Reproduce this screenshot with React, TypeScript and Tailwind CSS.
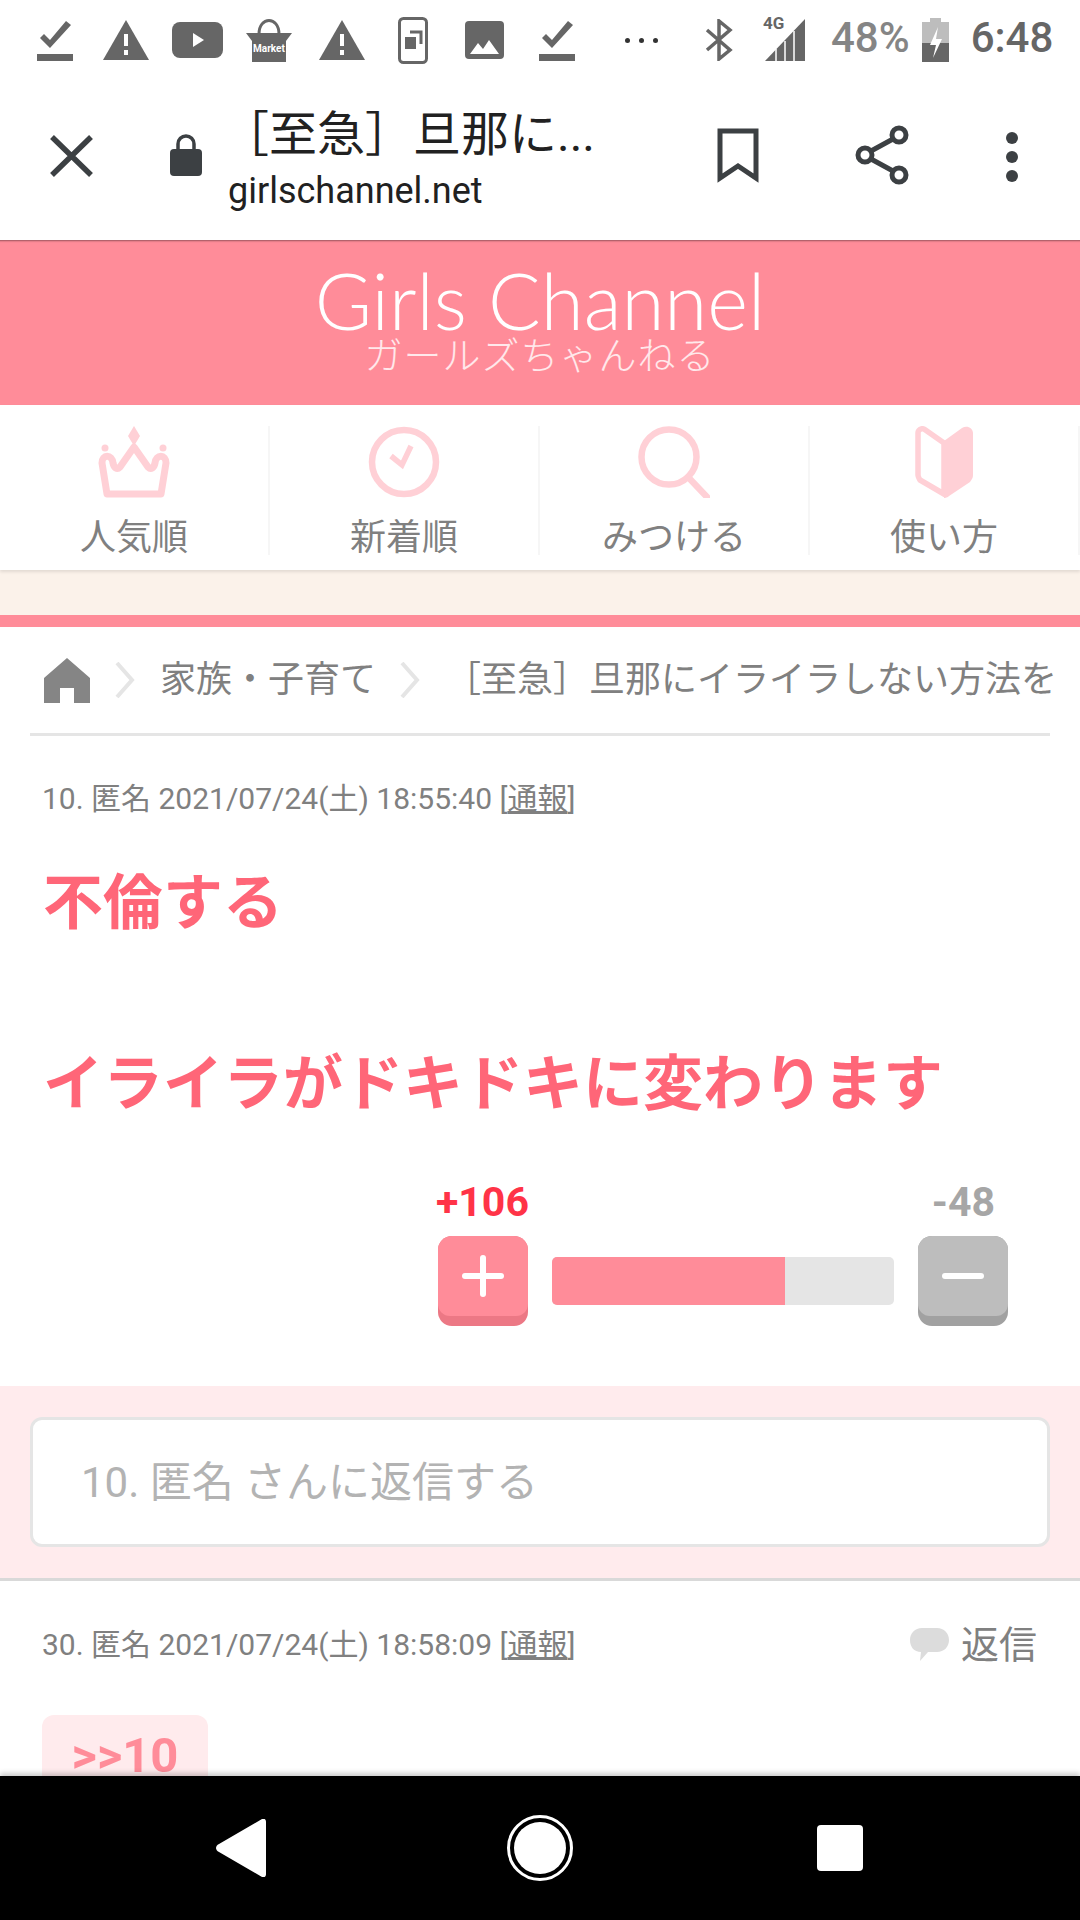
const font = "font-['Roboto','Noto_Sans_CJK_JP',sans-serif]";

function DoneIcon() {
  return (
    <svg width="36" height="42" viewBox="0 0 36 42" fill="#666">
      <path d="M3 19l4-4 6 6L29 2l5 4-21 23z" />
      <rect x="0" y="35" width="36" height="7" />
    </svg>
  );
}

function WarnIcon() {
  return (
    <svg width="46" height="40" viewBox="0 0 46 40">
      <path d="M23 0L46 40H0z" fill="#666" />
      <rect x="21" y="14" width="4" height="12" fill="#fff" />
      <rect x="21" y="30" width="4" height="5" fill="#fff" />
    </svg>
  );
}

function StatusBar() {
  return (
    <div className="h-[80px] shrink-0 flex items-center pl-[37px] bg-white">
      <DoneIcon />
      <div className="ml-[30px]"><WarnIcon /></div>
      <svg className="ml-[23px]" width="51" height="36" viewBox="0 0 51 36">
        <rect width="51" height="36" rx="8" fill="#666" />
        <path d="M21 11l11 7-11 7z" fill="#fff" />
      </svg>
      <svg className="ml-[23px]" width="46" height="44" viewBox="0 0 46 44">
        <path d="M13 16C13 -2 33 -2 33 16" fill="none" stroke="#666" strokeWidth="3" />
        <path d="M0 15h46l-6 8v21H6V23z" fill="#666" />
        <text x="23" y="34" textAnchor="middle" fontSize="10" fontWeight="700" fill="#fff" fontFamily="Roboto">Market</text>
      </svg>
      <div className="ml-[27px]"><WarnIcon /></div>
      <svg className="ml-[33px]" width="30" height="47" viewBox="0 0 30 47">
        <rect x="1.5" y="1.5" width="27" height="44" rx="4" fill="none" stroke="#666" strokeWidth="3" />
        <rect x="7" y="20" width="11" height="12" fill="#666" />
        <path d="M12 15h11v12" fill="none" stroke="#666" strokeWidth="3" />
      </svg>
      <svg className="ml-[37px]" width="39" height="38" viewBox="0 0 39 38">
        <rect width="39" height="38" rx="4" fill="#666" />
        <path d="M5 33l8-11 5 6 6-9 10 14z" fill="#fff" />
      </svg>
      <div className="ml-[35px]"><DoneIcon /></div>
      <div className="ml-[50px] flex gap-[9px]">
        <span className="w-[5px] h-[5px] rounded-full bg-[#333]" />
        <span className="w-[5px] h-[5px] rounded-full bg-[#333]" />
        <span className="w-[5px] h-[5px] rounded-full bg-[#333]" />
      </div>
      <svg className="ml-[47px]" width="28" height="42" viewBox="0 0 28 42" fill="none" stroke="#666" strokeWidth="3.5">
        <path d="M2 11l23 20-11 9V2l11 9L2 31" />
      </svg>
      <div className="ml-[31px] relative w-[41px] h-[42px]">
        <svg width="41" height="42" viewBox="0 0 41 42" fill="#666">
          <path d="M1 42L41 0v42z" />
          <path d="M12 30v12M21 22v20M30 12v30" stroke="#fff" strokeWidth="1.5" />
        </svg>
        <span className={`absolute left-[-1px] top-[-5px] text-[17px] leading-[18px] font-bold text-[#666] ${font}`}>4G</span>
      </div>
      <span className={`ml-[26px] mb-[4px] text-[42px] leading-none font-medium text-[#858585] ${font}`}>48%</span>
      <svg className="ml-[12px]" width="27" height="44" viewBox="0 0 27 44">
        <path d="M8 0h11v4h8v40H0V4h8z" fill="#bdbdbd" />
        <path d="M0 25h27v19H0z" fill="#666" />
        <path d="M16 9l-8 18h6l-3 13 9-19h-6z" fill="#fff" />
      </svg>
      <span className={`ml-[22px] mb-[4px] text-[42px] leading-none font-medium text-[#666] ${font}`}>6:48</span>
    </div>
  );
}

function Toolbar() {
  return (
    <div className="h-[160px] shrink-0 flex bg-white">
      <div className="w-[170px] flex items-start pl-[50px] pt-[55px]">
        <svg width="43" height="42" viewBox="0 0 43 42" stroke="#3c4043" strokeWidth="5.5" fill="none">
          <path d="M2 2l39 38M41 2L2 40" />
        </svg>
      </div>
      <div className="w-[58px] pt-[54px]">
        <svg width="32" height="42" viewBox="0 0 32 42">
          <path d="M8 16v-6a8 8 0 0116 0v6" fill="none" stroke="#3c4043" strokeWidth="3.5" />
          <rect y="15" width="32" height="27" rx="4" fill="#3c4043" />
        </svg>
      </div>
      <div className="w-[450px] flex flex-col">
        <div className={`mt-[28px] ml-[-7px] text-[48px] leading-[54px] whitespace-nowrap text-[#212121] ${font}`}>［至急］旦那に...</div>
        <div className={`mt-[6px] text-[36px] leading-[46px] whitespace-nowrap text-[#212121] ${font}`}>girlschannel.net</div>
      </div>
      <div className="pl-[39px] pt-[48px]">
        <svg width="42" height="56" viewBox="0 0 42 56" fill="none" stroke="#3c4043" strokeWidth="5">
          <path d="M3 3h36v47L21 38 3 50z" />
        </svg>
      </div>
      <div className="pl-[96px] pt-[45px]">
        <svg width="54" height="60" viewBox="0 0 54 60" fill="none" stroke="#3c4043" strokeWidth="5">
          <circle cx="44" cy="10" r="7" />
          <circle cx="10" cy="30" r="7" />
          <circle cx="44" cy="50" r="7" />
          <path d="M16 26l22-12M16 34l22 12" />
        </svg>
      </div>
      <div className="pl-[97px] pt-[52px] flex flex-col gap-[7px]">
        <span className="w-[12px] h-[12px] rounded-full bg-[#3c4043]" />
        <span className="w-[12px] h-[12px] rounded-full bg-[#3c4043]" />
        <span className="w-[12px] h-[12px] rounded-full bg-[#3c4043]" />
      </div>
    </div>
  );
}

function SiteHeader() {
  return (
    <div className="h-[165px] shrink-0 flex flex-col items-center bg-[#ff8c99] shadow-[inset_0_3px_2px_-2px_rgba(0,0,0,0.4)]">
      <div className="mt-[25px] text-[78px] leading-[70px] font-light text-white whitespace-nowrap font-['Lato','Noto_Sans',sans-serif]">
        Girls Channel
      </div>
      <div className={`text-[38px] leading-[42px] font-light tracking-[1px] text-white/80 whitespace-nowrap ${font}`}>
        ガールズちゃんねる
      </div>
    </div>
  );
}

const pink = "#ffd0d6";

const navItems = [
  {
    label: "人気順",
    icon: (
      <svg width="72" height="72" viewBox="0 0 72 72" fill="none">
        <path d="M36 0l6 10-6 10-6-10z" fill={pink} />
        <circle cx="7" cy="22" r="3.5" fill={pink} />
        <circle cx="65" cy="22" r="3.5" fill={pink} />
        <path d="M9 68L4 37c0-9 10-9 11 0 1 5 4 7 7 4l14-20 14 20c3 3 6 1 7-4 1-9 11-9 11 0l-5 31z" stroke={pink} strokeWidth="7" strokeLinejoin="round" />
      </svg>
    ),
  },
  {
    label: "新着順",
    icon: (
      <svg width="72" height="72" viewBox="0 0 72 72" fill="none">
        <circle cx="36" cy="36" r="32" stroke={pink} strokeWidth="6.5" />
        <path d="M23 30l11 9 9-19" stroke={pink} strokeWidth="5.5" />
      </svg>
    ),
  },
  {
    label: "みつける",
    icon: (
      <svg width="72" height="72" viewBox="0 0 72 72" fill="none">
        <circle cx="31" cy="31" r="27.5" stroke={pink} strokeWidth="6.5" />
        <path d="M50 51l19 20" stroke={pink} strokeWidth="6.5" strokeLinecap="round" />
      </svg>
    ),
  },
  {
    label: "使い方",
    icon: (
      <svg width="58" height="72" viewBox="0 0 58 72" fill="none">
        <path d="M29 15L47 2c5-3 11 0 11 5v42c0 3-1 4-3 7L34 70c-2 2-5 2-5 2z" fill={pink} />
        <path d="M29 17L9 3C6 2 3 4 3 7v42c0 2 1 3 2 5l24 14z" stroke={pink} strokeWidth="5.5" strokeLinejoin="round" />
      </svg>
    ),
  },
];

function NavBar() {
  return (
    <div className="h-[165px] shrink-0 grid grid-cols-4 pt-[21px] pb-[15px] bg-white shadow-[0_2px_3px_rgba(0,0,0,0.1)] relative">
      {navItems.map((item) => (
        <div key={item.label} className="flex flex-col items-center border-r-2 border-[#f6f6f6]">
          <div className="h-[72px] flex items-center">{item.icon}</div>
          <div className={`mt-[23px] text-[36px] leading-[34px] text-[#808080] whitespace-nowrap ${font}`}>{item.label}</div>
        </div>
      ))}
    </div>
  );
}

function Chevron() {
  return (
    <svg width="20" height="36" viewBox="0 0 20 36" fill="none" stroke="#e5e5e5" strokeWidth="4" className="shrink-0">
      <path d="M2 1l15 17L2 35" />
    </svg>
  );
}

function Breadcrumb() {
  return (
    <div className="mx-[30px] h-[109px] shrink-0 flex items-center pl-[14px] border-b-[3px] border-[#e5e5e5]">
      <svg width="46" height="45" viewBox="0 0 46 45" fill="#858585" className="shrink-0">
        <path fillRule="evenodd" d="M23 0l23 20v25H30V30H16v15H0V20z" />
      </svg>
      <div className="ml-[25px]"><Chevron /></div>
      <span className={`ml-[25px] text-[36px] leading-[40px] text-[#808080] whitespace-nowrap ${font}`}>家族・子育て</span>
      <div className="ml-[24px]"><Chevron /></div>
      <span className={`ml-[25px] text-[36px] leading-[40px] text-[#808080] whitespace-nowrap ${font}`}>［至急］旦那にイライラしない方法を</span>
    </div>
  );
}

function Meta({ text }: { text: string }) {
  return (
    <div className={`text-[30px] leading-[36px] text-[#808080] whitespace-nowrap ${font}`}>
      {text} [<span className="underline">通報</span>]
    </div>
  );
}

function VoteButton({ face, lip, minus }: { face: string; lip: string; minus?: boolean }) {
  return (
    <div className="w-[90px] h-[90px] rounded-[14px] overflow-hidden" style={{ background: lip }}>
      <div className="h-[80px] rounded-[12px] flex items-center justify-center" style={{ background: face }}>
        <svg width="42" height="42" viewBox="0 0 42 42" fill="#fff">
          <rect y="18" width="42" height="6" rx="3" />
          {!minus && <rect x="18" width="6" height="42" rx="3" />}
        </svg>
      </div>
    </div>
  );
}

function Votes() {
  return (
    <div className="mt-[50px] ml-[438px] w-[570px] h-[144px] flex flex-col">
      <div className={`flex justify-between pr-[13px] text-[41px] leading-[44px] font-bold ${font}`}>
        <span className="text-[#ff3347] ml-[-2px]">+106</span>
        <span className="text-[#a6a6a6]">-48</span>
      </div>
      <div className="mt-[12px] flex items-start">
        <VoteButton face="#ff8c99" lip="#ec7885" />
        <div className="mt-[21px] ml-[24px] w-[342px] h-[48px] rounded-[5px] overflow-hidden bg-[#e5e5e5]">
          <div className="h-full bg-[#ff8c99]" style={{ width: `${(233 / 342) * 100}%` }} />
        </div>
        <div className="ml-[24px]">
          <VoteButton face="#bdbdbd" lip="#a1a1a1" minus />
        </div>
      </div>
    </div>
  );
}

function ReplyBox() {
  return (
    <div className="mt-[62px] h-[195px] shrink-0 px-[30px] pt-[31px] bg-[#ffebed] border-b-[3px] border-[#d9d9d9]">
      <div className={`h-[130px] flex items-center px-[48px] rounded-[12px] border-[3px] border-[#e5e5e5] bg-white text-[42px] text-[#b3b3b3] whitespace-nowrap ${font}`}>
        10. 匿名 さんに返信する
      </div>
    </div>
  );
}

function AndroidNav() {
  return (
    <div className="h-[144px] shrink-0 bg-black flex items-center shadow-[0_-3px_5px_rgba(0,0,0,0.2)] relative">
      <svg className="ml-[216px]" width="50" height="58" viewBox="0 0 50 58" fill="#fff">
        <path d="M46 0c3-1 4 1 4 3v52c0 2-1 4-4 3L3 33c-4-2-4-6 0-8z" />
      </svg>
      <div className="ml-[241px] w-[66px] h-[66px] rounded-full border-[3px] border-white p-[4px]">
        <div className="w-full h-full rounded-full bg-white" />
      </div>
      <div className="ml-[244px] w-[46px] h-[46px] rounded-[4px] bg-white" />
    </div>
  );
}

export default function App() {
  return (
    <div className="w-[1080px] h-[1920px] flex flex-col overflow-hidden bg-white">
      <StatusBar />
      <Toolbar />
      <SiteHeader />
      <NavBar />
      <div className="h-[45px] shrink-0 bg-[#fbf2ea]" />
      <div className="h-[12px] shrink-0 bg-[#ff8c99]" />

      <div className="flex-1 min-h-0 overflow-hidden flex flex-col">
        <Breadcrumb />
        <div className="pl-[42px] pt-[45px]">
          <Meta text="10. 匿名 2021/07/24(土) 18:55:40" />
        </div>
        <div className={`pl-[43px] pt-[42px] text-[60px] leading-[90px] font-bold text-[#ff6678] ${font}`}>
          <p>不倫する</p>
          <p className="mt-[91px]">イライラがドキドキに変わります</p>
        </div>
        <Votes />
        <ReplyBox />
        <div className="pl-[42px] pr-[43px] pt-[42px] flex items-center justify-between">
          <Meta text="30. 匿名 2021/07/24(土) 18:58:09" />
          <div className="flex items-center gap-[12px]">
            <svg width="39" height="34" viewBox="0 0 39 34" fill="#dcdcdc">
              <path d="M12 0h15c7 0 12 5 12 12s-5 12-12 12H18l-8 9 1-9C4 24 0 19 0 12S5 0 12 0z" />
            </svg>
            <span className={`text-[38px] leading-[44px] text-[#808080] ${font}`}>返信</span>
          </div>
        </div>
        <div className="ml-[42px] mt-[48px] w-[166px] h-[100px] shrink-0 rounded-[12px] bg-[#ffebed] pt-[17px] text-center">
          <span className={`text-[49px] leading-[48px] font-bold text-[#ff8c99] ${font}`}>&gt;&gt;10</span>
        </div>
      </div>

      <AndroidNav />
    </div>
  );
}
